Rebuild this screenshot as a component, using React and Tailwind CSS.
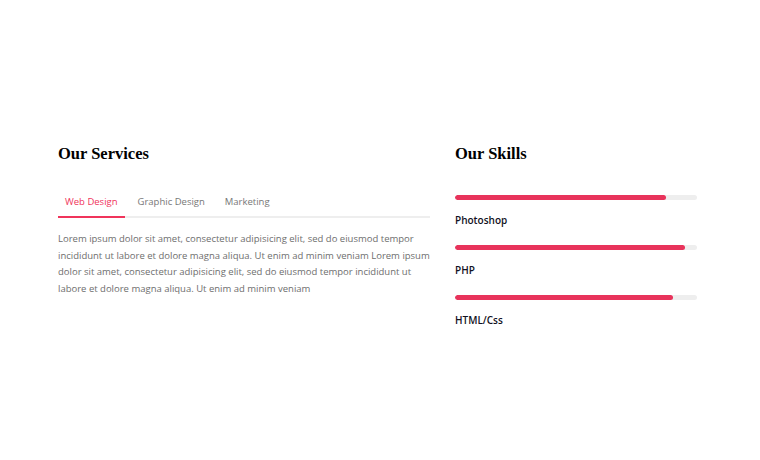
const skills = [
  { name: 'Photoshop', value: 87 },
  { name: 'PHP', value: 95 },
  { name: 'HTML/Css', value: 90 },
];

const tabs = ['Web Design', 'Graphic Design', 'Marketing'];

export default function App() {
  return (
    <div className="w-[760px] h-[460px] bg-white flex gap-[25px] pl-[58px] pt-[143px] font-['Open_Sans',sans-serif]">
      <div className="w-[372px]">
        <h2 className="text-[16.5px] leading-[22px] font-bold text-black font-['Liberation_Serif',serif]">
          Our Services
        </h2>
        <div className="mt-[26px] flex gap-[6px] border-b-2 border-[#eeeeee]">
          {tabs.map((tab, i) => (
            <button
              key={tab}
              className={`-mb-[2px] px-[7px] pt-[4px] pb-[7px] text-[9.5px] leading-[14px] border-b-2 ${
                i === 0 ? 'text-[#f0345b] border-[#f0345b]' : 'text-[#777777] border-transparent'
              }`}
            >
              {tab}
            </button>
          ))}
        </div>
        <p className="mt-[13px] text-[9.5px] leading-[16.7px] text-[#6e6e6e]">
          Lorem ipsum dolor sit amet, consectetur adipisicing elit, sed do eiusmod tempor incididunt ut labore et dolore magna aliqua. Ut enim ad minim veniam Lorem ipsum dolor sit amet, consectetur adipisicing elit, sed do eiusmod tempor incididunt ut labore et dolore magna aliqua. Ut enim ad minim veniam
        </p>
      </div>
      <div className="w-[242px]">
        <h2 className="text-[16.5px] leading-[22px] font-bold text-black font-['Liberation_Serif',serif]">
          Our Skills
        </h2>
        <div className="mt-[30px] flex flex-col gap-[18px]">
          {skills.map((s) => (
            <div key={s.name}>
              <div className="h-[5px] rounded-full bg-[#eeeeee] overflow-hidden">
                <div className="h-full rounded-full bg-[#e8335b]" style={{ width: `${s.value}%` }} />
              </div>
              <div className="mt-[13px] text-[10px] leading-[14px] font-semibold text-[#111122]">{s.name}</div>
            </div>
          ))}
        </div>
      </div>
    </div>
  );
}
